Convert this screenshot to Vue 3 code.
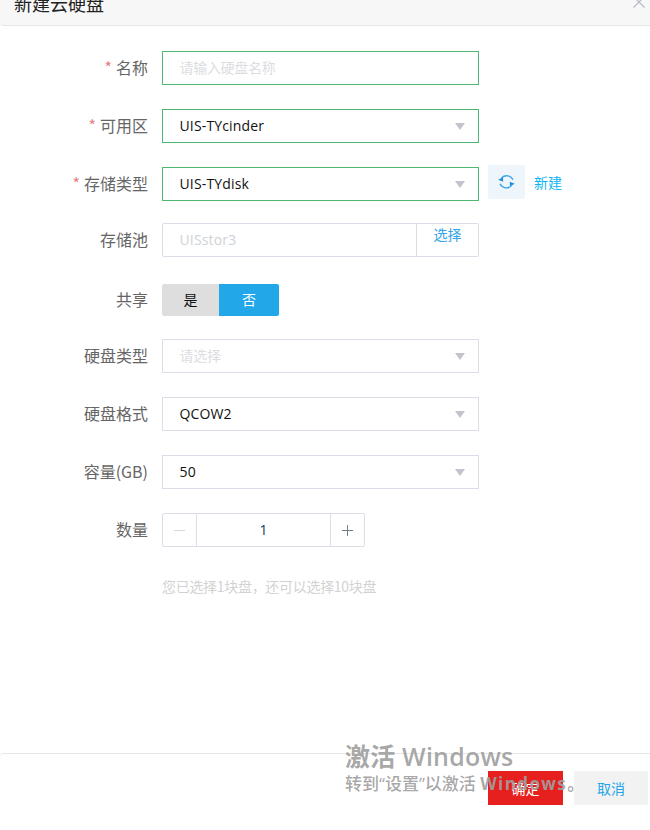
<script setup>
const selects = [
  { label: '硬盘类型', value: '请选择', placeholder: true, cls: 'r-type' },
  { label: '硬盘格式', value: 'QCOW2', placeholder: false, cls: 'r-format' },
  { label: '容量(GB)', value: '50', placeholder: false, cls: 'r-size' }
]
</script>

<template>
  <div class="page">
    <header class="head">
      <h1 class="title">新建云硬盘</h1>
      <svg class="close" width="14" height="14" viewBox="0 0 14 14">
        <path d="M1.5 1.5 L12.5 12.5 M12.5 1.5 L1.5 12.5" stroke="#b5bac3" stroke-width="1.2" fill="none" />
      </svg>
    </header>

    <main class="form">
      <div class="row r-name">
        <label class="label"><i>*</i>名称</label>
        <div class="box ok ph">请输入硬盘名称</div>
      </div>
      <div class="row r-zone">
        <label class="label"><i>*</i>可用区</label>
        <div class="box ok">UIS-TYcinder<span class="arrow"></span></div>
      </div>
      <div class="row r-store">
        <label class="label"><i>*</i>存储类型</label>
        <div class="box ok">UIS-TYdisk<span class="arrow"></span></div>
        <button class="refresh" type="button">
          <svg width="19" height="18" viewBox="0 0 19 18" fill="none">
            <path d="M4.5 5 A7 7 0 0 1 16 6.8" stroke="#35a4e6" stroke-width="1.3" />
            <path d="M14.5 12.6 A7 7 0 0 1 3 10.8" stroke="#35a4e6" stroke-width="1.3" />
            <polygon points="1.2,6.8 6,4.3 6.2,8.8" fill="#1f8fd8" />
            <polygon points="17.8,10.8 13,13.3 12.8,8.8" fill="#1f8fd8" />
          </svg>
        </button>
        <a class="link">新建</a>
      </div>
      <div class="row r-pool">
        <label class="label">存储池</label>
        <div class="pool">
          <span class="pool-value">UISstor3</span>
          <span class="pool-btn">选择</span>
        </div>
      </div>
      <div class="row r-share">
        <label class="label">共享</label>
        <div class="toggle">
          <span class="yes">是</span>
          <span class="no">否</span>
        </div>
      </div>
      <div v-for="s in selects" :key="s.label" class="row" :class="s.cls">
        <label class="label">{{ s.label }}</label>
        <div class="box" :class="{ ph: s.placeholder }">{{ s.value }}<span class="arrow"></span></div>
      </div>
      <div class="row r-count">
        <label class="label">数量</label>
        <div class="stepper">
          <span class="step minus">
            <svg width="11" height="11" viewBox="0 0 11 11"><path d="M0 5.5 H11" stroke="#d6d6e0" stroke-width="1" /></svg>
          </span>
          <span class="num">1</span>
          <span class="step plus">
            <svg width="11" height="11" viewBox="0 0 11 11"><path d="M0 5.5 H11 M5.5 0 V11" stroke="#707c88" stroke-width="1" /></svg>
          </span>
        </div>
      </div>
      <p class="hint">您已选择1块盘，还可以选择10块盘</p>
    </main>

    <footer class="foot">
      <button class="btn confirm" type="button">确定</button>
      <button class="btn cancel" type="button">取消</button>
    </footer>

    <div class="watermark">
      <div class="wm1">激活 Windows</div>
      <div class="wm2">转到“设置”以激活 <span class="wm-win">Windows。</span></div>
    </div>
  </div>
</template>

<style scoped>
.page {
  position: relative;
  width: 650px;
  height: 830px;
  background: #fff;
  overflow: hidden;
  display: flex;
  flex-direction: column;
  font-family: "Noto Sans CJK SC", "Open Sans", sans-serif;
}
.head {
  height: 26px;
  box-sizing: border-box;
  flex: none;
  background: #f7f7f7;
  border-bottom: 1px solid #e6e6e6;
  border-bottom-left-radius: 4px;
  display: flex;
  justify-content: space-between;
  align-items: flex-end;
  padding: 0 4px 10px 14px;
}
.title {
  margin: 0;
  font-size: 18px;
  font-weight: 400;
  line-height: 24px;
  color: #222;
}
.close {
  margin-bottom: 6.5px;
}
.form {
  flex: 1;
  padding-top: 25px;
}
.row {
  display: flex;
  align-items: center;
  height: 34px;
  margin-bottom: 24px;
}
.r-store { margin-bottom: 22px; }
.r-pool { margin-bottom: 27px; }
.r-share { height: 32px; margin-bottom: 23px; }
.label {
  width: 148px;
  flex: none;
  text-align: right;
  font-size: 16px;
  line-height: 20px;
  padding-bottom: 3px;
  color: #666;
  margin-right: 14px;
}
.label i {
  font-style: normal;
  color: #e58080;
  margin-right: 4px;
}
.box {
  position: relative;
  width: 317px;
  height: 34px;
  box-sizing: border-box;
  border: 1px solid #dcdde6;
  padding-left: 16.5px;
  font-size: 14px;
  line-height: 31px;
  letter-spacing: 0.15px;
  color: #111;
  font-family: "Open Sans", "Noto Sans CJK SC", sans-serif;
}
.box.ok { border-color: #4cb871; }
.box.ph { color: #dcdde2; font-family: "Noto Sans CJK SC", sans-serif; line-height: 30px; letter-spacing: -0.3px; }
.arrow {
  position: absolute;
  right: 13px;
  top: 13px;
  width: 0;
  height: 0;
  border-left: 5.5px solid transparent;
  border-right: 5.5px solid transparent;
  border-top: 7px solid #c2c3cc;
}
.refresh {
  width: 37px;
  height: 34px;
  margin: -4px 0 0 9px;
  padding: 0;
  border: 0;
  border-radius: 2px;
  background: #eef6fc;
  display: flex;
  align-items: center;
  justify-content: center;
}
.link {
  margin-left: 9px;
  font-size: 14px;
  line-height: 20px;
  padding-bottom: 4px;
  color: #10b6f2;
}
.pool {
  width: 317px;
  height: 34px;
  box-sizing: border-box;
  border: 1px solid #dcdde6;
  border-radius: 2px;
  display: flex;
}
.pool-value {
  flex: 1;
  padding-left: 16.5px;
  font-family: "Open Sans", "Noto Sans CJK SC", sans-serif;
  font-size: 14px;
  line-height: 31px;
  letter-spacing: 0.15px;
  color: #cfd2d9;
}
.pool-btn {
  width: 62px;
  box-sizing: border-box;
  border-left: 1px solid #dcdde6;
  text-align: center;
  font-size: 14px;
  line-height: 20px;
  color: #33a3ea;
}
.toggle {
  display: flex;
  height: 32px;
  width: 117px;
  font-size: 14px;
  line-height: 30px;
  text-align: center;
}
.yes {
  width: 57px;
  background: #dedede;
  color: #111;
  border-radius: 2px 0 0 2px;
}
.no {
  width: 60px;
  background: #22a7e8;
  color: #fff;
  border-radius: 0 2px 2px 0;
}
.stepper {
  width: 203px;
  height: 34px;
  box-sizing: border-box;
  border: 1px solid #dcdde6;
  border-radius: 2px;
  display: flex;
  text-align: center;
  line-height: 32px;
}
.step {
  width: 33px;
  flex: none;
  display: flex;
  align-items: center;
  justify-content: center;
}
.minus { border-right: 1px solid #dcdde6; }
.plus { border-left: 1px solid #dcdde6; }
.num {
  flex: 1;
  font-family: "Open Sans", sans-serif;
  font-size: 14px;
  color: #123c66;
}
.hint {
  margin: 29px 0 0 162px;
  font-size: 14px;
  line-height: 20px;
  letter-spacing: -0.3px;
  color: #d2d2d2;
}
.foot {
  flex: none;
  height: 77px;
  box-sizing: border-box;
  border-top: 1px solid #e6e6e6;
  border-top-left-radius: 4px;
  display: flex;
  justify-content: flex-end;
  gap: 11px;
  padding: 17px 2px 0 0;
}
.btn {
  width: 75px;
  height: 34px;
  padding: 0;
  border: 0;
  font-family: "Noto Sans CJK SC", sans-serif;
  font-size: 14px;
}
.confirm { background: #e61f1f; color: #fff; }
.cancel { width: 74px; background: #f2f2f2; color: #23a5e8; }
.watermark {
  position: absolute;
  left: 345px;
  top: 739px;
  color: rgba(160, 160, 160, 0.92);
  font-family: "Open Sans", "Noto Sans CJK SC", sans-serif;
  font-weight: 600;
  pointer-events: none;
}
.wm1 { font-size: 25px; line-height: 34px; letter-spacing: 0.2px; }
.wm2 { font-size: 17px; line-height: 22px; white-space: nowrap; font-weight: 500; }
.wm-win { font-weight: 700; letter-spacing: 1.4px; }
</style>
<style>
html, body { margin: 0; background: #fff; }
</style>
